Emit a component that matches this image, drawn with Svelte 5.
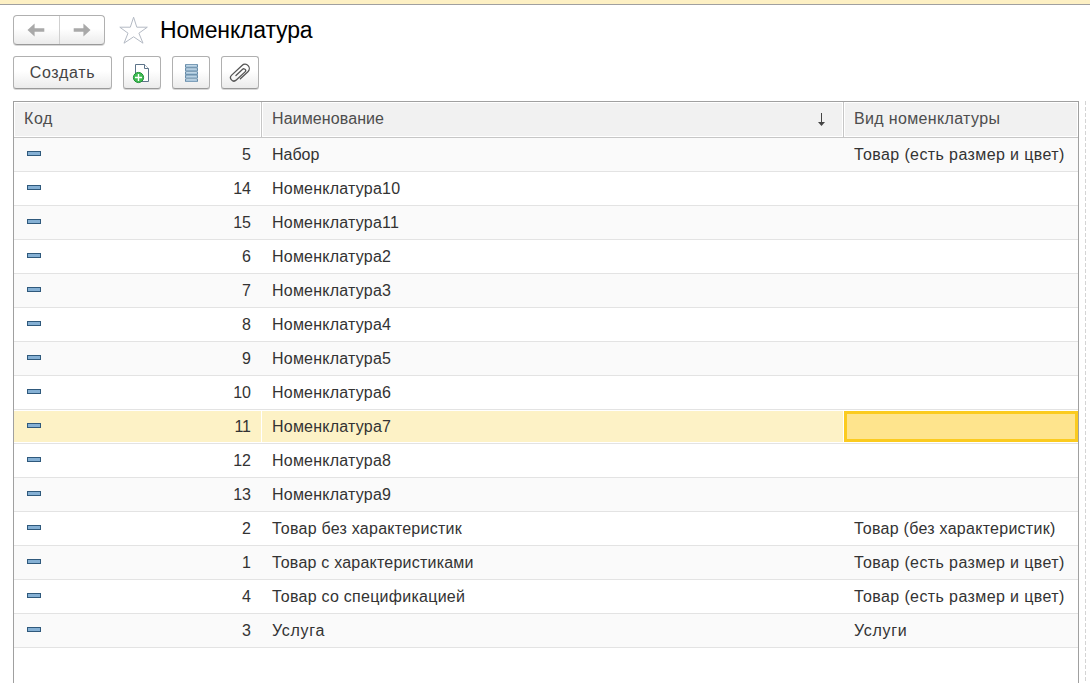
<script>
  const rows = [
    { code: 5, name: 'Набор', kind: 'Товар (есть размер и цвет)', nameGap: 0, kindGap: 0.4 },
    { code: 14, name: 'Номенклатура10', kind: '', nameGap: 0.22, kindGap: 0 },
    { code: 15, name: 'Номенклатура11', kind: '', nameGap: 0.22, kindGap: 0 },
    { code: 6, name: 'Номенклатура2', kind: '', nameGap: 0.22, kindGap: 0 },
    { code: 7, name: 'Номенклатура3', kind: '', nameGap: 0.22, kindGap: 0 },
    { code: 8, name: 'Номенклатура4', kind: '', nameGap: 0.22, kindGap: 0 },
    { code: 9, name: 'Номенклатура5', kind: '', nameGap: 0.22, kindGap: 0 },
    { code: 10, name: 'Номенклатура6', kind: '', nameGap: 0.22, kindGap: 0 },
    { code: 11, name: 'Номенклатура7', kind: '', nameGap: 0.22, kindGap: 0 },
    { code: 12, name: 'Номенклатура8', kind: '', nameGap: 0.22, kindGap: 0 },
    { code: 13, name: 'Номенклатура9', kind: '', nameGap: 0.22, kindGap: 0 },
    { code: 2, name: 'Товар без характеристик', kind: 'Товар (без характеристик)', nameGap: 0.25, kindGap: 0.27 },
    { code: 1, name: 'Товар с характеристиками', kind: 'Товар (есть размер и цвет)', nameGap: 0.22, kindGap: 0.4 },
    { code: 4, name: 'Товар со спецификацией', kind: 'Товар (есть размер и цвет)', nameGap: 0.26, kindGap: 0.4 },
    { code: 3, name: 'Услуга', kind: 'Услуги', nameGap: 0.7, kindGap: 0.7 }
  ];
  let selected = $state(11);
</script>

<div class="page">
  <div class="strip"></div>
  <header class="titlebar">
    <div class="nav">
      <button aria-label="Назад">
        <svg width="18" height="14" viewBox="0 0 18 14"><path d="M0.5 7L7.6 0.6V5.3H17.3V8.7H7.6V13.4Z" fill="#a9a9a9" /></svg>
      </button>
      <button aria-label="Вперед">
        <svg width="18" height="14" viewBox="0 0 18 14"><path d="M17.5 7L10.4 0.6V5.3H0.7V8.7H10.4V13.4Z" fill="#a9a9a9" /></svg>
      </button>
    </div>
    <svg class="star" width="30" height="30" viewBox="0 0 30 30">
      <path d="M14.6 2.2L17.8 12.2H28.3L19.9 18.2L24 28.2L14.6 21.8L5 28.2L9 18.2L0.8 12.2H11.3Z" fill="#fff" stroke="#b4bac4" stroke-width="1" />
    </svg>
    <h1>Номенклатура</h1>
  </header>

  <div class="toolbar">
    <button class="btn create">Создать</button>
    <button class="btn icon" aria-label="Скопировать">
      <svg width="20" height="22" viewBox="0 0 20 22">
        <path d="M3.5 2.5H12.5L16.5 6.5V19.5H3.5Z" fill="#fff" stroke="#5c7389" />
        <path d="M12.5 2.5V6.5H16.5" fill="#fff" stroke="#5c7389" />
        <circle cx="6.5" cy="15.5" r="5.1" fill="#3dbb50" stroke="#1f9137" />
        <path d="M6.5 12V19M3 15.5H10" stroke="#fff" stroke-width="1.4" />
      </svg>
    </button>
    <button class="btn icon" aria-label="Список">
      <svg width="14" height="20" viewBox="0 0 14 20">
        {#each [0, 1, 2, 3, 4] as i}
          <rect x="1" y={1 + i * 3.6} width="13" height="3.7" rx="1" fill="#668ba8" />
          <rect x="2" y={1.8 + i * 3.6} width="11" height="2.2" fill="#a3c1d8" />
          <rect x="2.5" y={1.9 + i * 3.6} width="10" height="1" fill="#c5dae8" />
        {/each}
      </svg>
    </button>
    <button class="btn icon" aria-label="Файлы">
      <svg width="22" height="22" viewBox="0 0 22 22" fill="none" stroke="#555" stroke-width="1.3" stroke-linecap="round">
        <path transform="translate(11 11.2) rotate(47)" d="M4.3 3.5V-6.8A4.3 4.3 0 0 0 -4.3 -6.8V7.4A3.4 3.4 0 0 0 2.5 7.4V-4.6A1.8 1.8 0 0 0 -1.1 -4.6V4.5" />
      </svg>
    </button>
  </div>

  <main>
    <div class="table">
      <div class="row head">
        <div class="cell code-title">Код</div>
        <div class="cell sorted">
          <span>Наименование</span>
          <svg width="8" height="14" viewBox="0 0 8 14"><path d="M3.5 0V11" stroke="#444" /><path d="M0 9H7L3.5 13Z" fill="#444" /></svg>
        </div>
        <div class="cell kind">Вид номенклатуры</div>
      </div>
      {#each rows as row}
        <div class="row item" class:selected={row.code === selected}>
          <div class="cell code"><i class="mark"></i><span>{row.code}</span></div>
          <div class="cell" style:letter-spacing="{row.nameGap}px">{row.name}</div>
          <div class="cell last" style:letter-spacing="{row.kindGap}px">{row.kind}</div>
        </div>
      {/each}
    </div>
    <div class="splitter"></div>
  </main>
</div>

<style>
  :global(body) { background: #fff; overflow: hidden; }
  .page {
    height: 683px;
    display: flex;
    flex-direction: column;
    overflow: hidden;
    font: 16px/20px "Liberation Sans", Arial, sans-serif;
    color: #333;
  }
  .strip { box-sizing: border-box; height: 5px; flex: none; background: #fdf0c4; border-bottom: 1px solid #a0a0a0; }
  button { font: inherit; color: #444; padding: 0; margin: 0; }
  .titlebar { display: flex; height: 31px; padding: 10px 0 0 13px; flex: none; }
  .nav {
    box-sizing: border-box;
    display: flex;
    width: 92px;
    height: 30px;
    border: 1px solid #b0b0b0;
    border-bottom-color: #999;
    border-radius: 4px;
    background: linear-gradient(#fff 45%, #ebebeb);
    box-shadow: 0 1px 0 #d8d8d8;
  }
  .nav button { flex: 1; border: 0; background: none; display: flex; align-items: center; justify-content: center; }
  .nav button + button { border-left: 1px solid #d0d0d0; }
  .star { margin: 0 0 0 14px; }
  h1 { margin: 2px 0 0 11px; font-size: 23px; line-height: 26px; font-weight: 400; letter-spacing: -0.16px; color: #000; }
  .toolbar { display: flex; height: 34px; padding: 10px 0 11px 13px; flex: none; }
  .btn {
    box-sizing: border-box;
    height: 33px;
    border: 1px solid #b0b0b0;
    border-bottom-color: #999;
    border-radius: 3px;
    background: linear-gradient(#fff 45%, #ebebeb);
    box-shadow: 0 1px 0 #d8d8d8;
    display: flex;
    align-items: center;
    justify-content: center;
  }
  .create { width: 99px; margin-right: 11px; letter-spacing: 0.7px; }
  .icon { width: 38px; margin-right: 11px; }
  main { display: flex; flex: 1; padding-left: 13px; min-height: 0; }
  .table { width: 1064px; border: 1px solid #a0a0a0; border-bottom: 0; }
  .row { display: grid; grid-template-columns: 247px 582px 1fr; box-sizing: border-box; }
  .cell { box-sizing: border-box; padding: 7px 10px 0; white-space: nowrap; }
  .head { height: 36px; border-bottom: 1px solid #c6c6c6; color: #4d4d4d; letter-spacing: 0.1px; }
  .head .kind { letter-spacing: 0.35px; }
  .head .code-title { letter-spacing: 0.6px; }
  .head .cell { border: 1px solid #fff; background: #f1f1f1; padding: 6px 9px 0; }
  .head .cell:not(:last-child) { box-shadow: 1px 0 0 #c6c6c6; }
  .head .cell + .cell { margin-left: 1px; }
  .sorted { display: flex; justify-content: space-between; }
  .sorted svg { margin: 4px 7px 0 0; }
  .item { height: 34px; border-bottom: 1px solid #e3e3e3; }
  .item:nth-child(even) { background: #fafafa; }
  .item .cell + .cell { margin-left: 1px; padding-left: 10px; }
  .code { display: flex; justify-content: space-between; }
  .mark { box-sizing: border-box; width: 14px; height: 5px; margin: 6px 0 0 3px; border: 1px solid #2f597c; background: #85b0d4; }
  .item.selected { background: #fff; padding: 1px 0; }
  .selected .cell { background: #fdf2c6; padding-top: 6px; }
  .selected .last { background: #fee48d; border: 3px solid #fbcb1f; }
  .splitter { width: 1px; margin-left: 6px; background: repeating-linear-gradient(#d4d4d4 0 4px, #fff 4px 6px); }
</style>
